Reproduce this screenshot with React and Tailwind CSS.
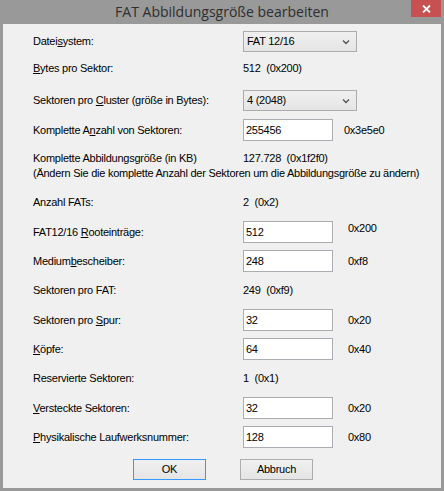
import React from 'react';

// Underlined access-key letter, as in WinForms labels
function Key({ children }) {
  return <span className="underline underline-offset-[1px]">{children}</span>;
}

function Combo({ value }) {
  return (
    <div className="flex items-center justify-between w-[114px] h-[21px] border border-[#acacac] bg-gradient-to-b from-[#f0f0f0] to-[#e5e5e5] pl-[3px] pr-[6px]">
      <span>{value}</span>
      <svg width="8" height="6" viewBox="0 0 8 6">
        <path d="M1 1.5 L4 4.5 L7 1.5" fill="none" stroke="#555" strokeWidth="1.4" />
      </svg>
    </div>
  );
}

function Field({ value }) {
  return (
    <div className="flex items-center w-[90px] h-[22px] border border-[#abadb3] bg-white pl-[2px]">
      {value}
    </div>
  );
}

function Row({ label, children, className = '' }) {
  return (
    <div className={`flex items-center pl-[30px] ${className}`}>
      <div className="w-[210px] shrink-0">{label}</div>
      {children}
    </div>
  );
}

export default function App() {
  return (
    <div className="w-[444px] h-[491px] bg-[#999999] flex flex-col" style={{ fontFamily: '"Liberation Sans", Arial, sans-serif' }}>
      {/* title bar */}
      <div className="relative h-[24px] shrink-0 flex items-center justify-center">
        <span className="text-[14px] text-[#2e2e2e] -mt-[1px]" style={{ fontFamily: '"Open Sans", "Noto Sans", sans-serif' }}>
          FAT Abbildungsgröße bearbeiten
        </span>
        <div className="absolute right-[3px] top-0 w-[30px] h-[17px] bg-[#c75050] flex items-center justify-center">
          <svg width="9" height="8" viewBox="0 0 9 8">
            <path d="M1 0.5 L8 7.5 M8 0.5 L1 7.5" stroke="#fff" strokeWidth="1.8" />
          </svg>
        </div>
      </div>

      {/* client area */}
      <div className="mx-[3px] h-[464px] bg-[#f0f0f0] text-[11px] tracking-[-0.25px] text-black pt-[7px] leading-[15px]">
        <Row label={<>Datei<Key>s</Key>ystem:</>} className="h-[21px]">
          <Combo value="FAT 12/16" />
        </Row>

        <Row label={<><Key>B</Key>ytes pro Sektor:</>} className="h-[20px] mt-[6px]">
          <span className="whitespace-pre">512  (0x200)</span>
        </Row>

        <Row label={<>Sektoren pro <Key>C</Key>luster (größe in Bytes):</>} className="h-[21px] mt-[12px]">
          <Combo value="4 (2048)" />
        </Row>

        <Row label={<>Komplette A<Key>n</Key>zahl von Sektoren:</>} className="h-[22px] mt-[8px]">
          <Field value="255456" />
          <span className="ml-[11px]">0x3e5e0</span>
        </Row>

        <div className="pl-[30px] mt-[10px] h-[30px]">
          <div className="flex">
            <div className="w-[210px] shrink-0">Komplette Abbildungsgröße (in KB)</div>
            <span className="whitespace-pre">127.728  (0x1f2f0)</span>
          </div>
          <div>(Ändern Sie die komplette Anzahl der Sektoren um die Abbildungsgröße zu ändern)</div>
        </div>

        <Row label="Anzahl FATs:" className="h-[20px] mt-[11px]">
          <span className="whitespace-pre">2  (0x2)</span>
        </Row>

        <Row label={<>FAT12/16 <Key>R</Key>ooteinträge:</>} className="h-[22px] mt-[9px]">
          <Field value="512" />
          <span className="ml-[15px] mb-[8px]">0x200</span>
        </Row>

        <Row label={<>Medium<Key>b</Key>escheiber:</>} className="h-[22px] mt-[7px]">
          <Field value="248" />
          <span className="ml-[15px]">0xf8</span>
        </Row>

        <Row label="Sektoren pro FAT:" className="h-[20px] mt-[8px]">
          <span className="whitespace-pre">249  (0xf9)</span>
        </Row>

        <Row label={<>Sektoren pro <Key>S</Key>pur:</>} className="h-[22px] mt-[9px]">
          <Field value="32" />
          <span className="ml-[15px]">0x20</span>
        </Row>

        <Row label={<><Key>K</Key>öpfe:</>} className="h-[22px] mt-[7px]">
          <Field value="64" />
          <span className="ml-[15px]">0x40</span>
        </Row>

        <Row label="Reservierte Sektoren:" className="h-[20px] mt-[8px]">
          <span className="whitespace-pre">1  (0x1)</span>
        </Row>

        <Row label={<><Key>V</Key>ersteckte Sektoren:</>} className="h-[22px] mt-[9px]">
          <Field value="32" />
          <span className="ml-[15px]">0x20</span>
        </Row>

        <Row label={<><Key>P</Key>hysikalische Laufwerksnummer:</>} className="h-[22px] mt-[7px]">
          <Field value="128" />
          <span className="ml-[15px]">0x80</span>
        </Row>

        {/* dialog buttons */}
        <div className="flex mt-[11px] pl-[130px] gap-[34px]">
          <button className="w-[73px] h-[21px] border border-[#3399ff] bg-gradient-to-b from-[#f0f0f0] to-[#e5e5e5] text-[11px]">
            OK
          </button>
          <button className="w-[73px] h-[21px] border border-[#adadad] bg-gradient-to-b from-[#f0f0f0] to-[#e5e5e5] text-[11px]">
            Abbruch
          </button>
        </div>
      </div>
    </div>
  );
}
